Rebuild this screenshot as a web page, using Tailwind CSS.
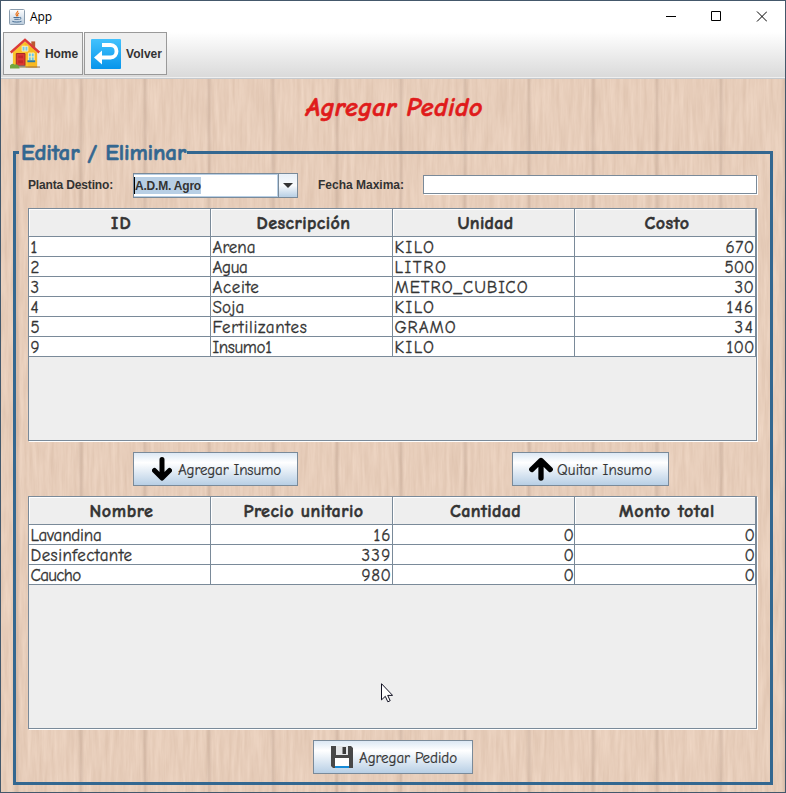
<!DOCTYPE html>
<html lang="es">
<head>
<meta charset="utf-8">
<title>App</title>
<script src="https://cdn.jsdelivr.net/npm/@tailwindcss/browser@4"></script>
</head>
<body class="w-[786px] h-[793px] overflow-hidden">
<div class="relative isolate w-[786px] h-[793px] border border-[#44586b] flex flex-col text-[#333333] overflow-hidden font-['Comic_Sans_MS','Comic_Neue','Open_Sans',sans-serif]">

  <header class="h-[31px] shrink-0 bg-white flex items-center pl-2 text-black">
    <svg class="w-4 h-4" viewBox="0 0 16 16"><defs><linearGradient id="jb" x2="0" y2="1"><stop stop-color="#fff"/><stop offset="1" stop-color="#b9cbdc"/></linearGradient></defs><rect x=".5" y=".5" width="15" height="15" rx="1" fill="url(#jb)" stroke="#8b9dae"/><path d="M8.6 1.8c1 1.6-2.9 2.3-1.4 4.2l.9 1.3M10 4.1C8.500 5 8 5.500 9.100 7.300" fill="none" stroke="#e8731c" stroke-width="1.200"/><path d="M4.500 8.500h6M5.300 10.300h4.500M10.500 8.500c2-.6 2 1.400 0 2M3.300 12.300c1.500 1 7.500 1 9.200 0" fill="none" stroke="#466d94"/></svg>
    <span class="ml-[5px] text-xs leading-4 font-['Segoe_UI','Open_Sans',sans-serif]" data-w="22">App</span>
    <svg class="ml-auto mr-[18px] w-[101px] h-[11px]" viewBox="0 0 101 11" fill="none" stroke="#000"><path d="M0 5.500h10"/><path d="M45.500.5h9v9h-9z"/><path d="M91 .5l10 10M101 .5l-10 10"/></svg>
  </header>

  <nav class="h-[45px] shrink-0 bg-gradient-to-b from-white to-[#dadada] flex gap-px pl-[2px] font-['Arial','Liberation_Sans',sans-serif] font-bold text-xs">
    <button class="w-20 h-[43px] bg-[#eeeeee] border border-[#999999] flex items-center pl-[6px]">
      <svg class="w-[30px] h-[31px] shrink-0" viewBox="0 0 31 31"><path d="M22 3h4v9h-4z" fill="#ba5a31"/><path d="M3 14L15.500 3 28 14v16H3z" fill="#fbc52c"/><path d="M15 4l13 11v15H19z" fill="#f5ae1b" opacity=".55"/><path d="M.8 14.500L15.500 1.500 30.200 14.500" fill="none" stroke="#db3b38" stroke-width="2.500"/><path d="M12.500 8h6v5h-6z" fill="#72c9ed" stroke="#fff2bd"/><path d="M15.500 8v5" stroke="#fff2bd"/><path d="M6.500 15.500h9V28h-9z" fill="#dc3835" stroke="#a42b23"/><path d="M8.500 17.500h5v3h-5zm0 5h5v3h-5z" fill="#c62828"/><path d="M19 15h6v8h-6z" fill="#67c6ed" stroke="#fff0ae"/><path d="M22 15v8M19 19h6" stroke="#fff0ae"/><path d="M18 23.500h8" stroke="#2678a6" stroke-width="2"/><path d="M6 28h10v2H6z" fill="#8f8f89"/><path d="M16 29.500h15" stroke="#8f6540"/><path d="M0 31v-3q2-3 5-1 3-2 5 4z" fill="#74a740"/></svg>
      <span class="ml-[5px] whitespace-nowrap" data-w="33">Home</span>
    </button>
    <button class="w-[83px] h-[43px] bg-[#eeeeee] border border-[#999999] flex items-center pl-[6px]">
      <svg class="w-[30px] h-[30px] shrink-0" viewBox="0 0 30 30"><defs><linearGradient id="vb" x2="0" y2="1"><stop stop-color="#43c2fd"/><stop offset="1" stop-color="#0795eb"/></linearGradient></defs><rect width="30" height="30" rx="1" fill="url(#vb)"/><path d="M11 6h8.500c8 0 8 12.500 0 12.500H10" fill="none" stroke="#fff" stroke-width="3.800"/><path d="M3 18.500L11 11.500v14z" fill="#fff"/></svg>
      <span class="ml-[5px] whitespace-nowrap" data-w="36">Volver</span>
    </button>
  </nav>
  <div class="h-[2px] shrink-0 bg-[#eeeeee] border-b border-[#c5c9cd]"></div>

  <main class="relative flex-1 pt-[14px] px-3 flex flex-col">
    <svg class="absolute inset-0 -z-10 w-[784px] h-[714px]" aria-hidden="true">
      <defs>
        <filter id="grain" x="0" y="0" width="100%" height="100%" color-interpolation-filters="sRGB"><feTurbulence type="fractalNoise" baseFrequency=".26 .022" numOctaves="4" seed="8"/><feColorMatrix values=".075 0 0 0 .868  .09 0 0 0 .76  .1 0 0 0 .68  0 0 0 0 1"/></filter>
        <linearGradient id="joint"><stop stop-color="#a98d7c" stop-opacity="0"/><stop offset=".5" stop-color="#a98d7c" stop-opacity=".3"/><stop offset="1" stop-color="#a98d7c" stop-opacity="0"/></linearGradient>
        <pattern id="planks" x="13" width="64" height="714" patternUnits="userSpaceOnUse"><rect width="6" height="714" fill="url(#joint)"/></pattern>
      </defs>
      <rect width="784" height="714" filter="url(#grain)"/><rect width="784" height="714" fill="url(#planks)"/>
    </svg>

    <h1 class="h-[30px] text-[26px] leading-[31px] font-bold italic text-[#e01b1b] pl-[293px] whitespace-nowrap [-webkit-text-stroke:0.6px_#e01b1b]"><span data-w="177">Agregar Pedido</span></h1>

    <fieldset class="mt-[14px] w-[760px] h-[648px] border-[3px] border-[#336790] px-3">
      <legend class="-ml-[9px] w-[168px] h-[31px] pl-[2px] text-[23px] leading-[32px] font-bold text-[#336790] whitespace-nowrap [-webkit-text-stroke:0.6px_#336790]"><span data-w="165">Editar / Eliminar</span></legend>

      <div class="h-[40px] pt-[5px] flex items-start font-['Arial','Liberation_Sans',sans-serif] font-bold text-xs">
        <label class="w-[105px] leading-[25px]"><span data-w="85">Planta Destino:</span></label>
        <div class="w-[165px] h-[25px] border border-[#7a8a99] bg-white flex">
          <div class="flex-1 border-[#b8cfe5] border-y border-r pt-[2px]"><span class="inline-block h-[17px] leading-[18px] bg-[#b8cfe5] border-l border-black whitespace-nowrap" data-w="67">A.D.M. Agro</span></div>
          <div class="w-[19px] border-l border-[#7a8a99] bg-gradient-to-b from-[#e8f0f8] via-[#f8fafc] to-[#b8cfe5] flex items-center justify-center"><svg class="w-[10px] h-[5px]" viewBox="0 0 10 5"><path d="M0 0h10L5 5z" fill="#333"/></svg></div>
        </div>
        <label class="ml-5 w-[105px] leading-[25px]"><span data-w="86">Fecha Maxima:</span></label>
        <div class="mt-[2px] w-[334px] h-[19px] bg-white border border-[#7a8a99] shadow-[1px_1px_0_#fff]"></div>
      </div>

      <div class="w-[729px] h-[233px] border border-[#7a8a99] bg-[#eeeeee] shadow-[1px_1px_0_#fff]" data-table="insumos"></div>

      <div class="h-[55px] pt-[11px] flex pl-[105px]">
        <button class="w-[165px] h-[34px] border border-[#7a8a99] bg-gradient-to-b from-[#dce8f4] via-white via-30% to-[#b8cfe5] flex items-center pl-[18px] text-[15px]">
          <svg class="w-5 h-6 shrink-0" viewBox="0 0 20 24"><path d="M10 2.500v18M2.500 13.500L10 21l7.500-7.500" fill="none" stroke="#000" stroke-width="5" stroke-linecap="round" stroke-linejoin="round"/></svg>
          <span class="ml-[6px] mt-[3px] whitespace-nowrap [-webkit-text-stroke:0.2px_#333333]" data-w="103">Agregar Insumo</span>
        </button>
        <button class="ml-[214px] w-[157px] h-[34px] border border-[#7a8a99] bg-gradient-to-b from-[#dce8f4] via-white via-30% to-[#b8cfe5] flex items-center pl-4 text-[15px]">
          <svg class="w-6 h-6 shrink-0" viewBox="0 0 24 24"><path d="M12 21V4M2.800 12.500L12 3.500l9.200 9" fill="none" stroke="#000" stroke-width="5.300" stroke-linecap="round" stroke-linejoin="round"/></svg>
          <span class="ml-1 mt-[3px] whitespace-nowrap [-webkit-text-stroke:0.2px_#333333]" data-w="95">Quitar Insumo</span>
        </button>
      </div>

      <div class="w-[729px] h-[233px] border border-[#7a8a99] bg-[#eeeeee] shadow-[1px_1px_0_#fff]" data-table="pedido"></div>

      <button class="mt-[11px] ml-[285px] w-[160px] h-[34px] border border-[#7a8a99] bg-gradient-to-b from-[#dce8f4] via-white via-30% to-[#b8cfe5] flex items-center pl-4 text-[15px]">
        <svg class="w-6 h-6 shrink-0" viewBox="0 0 24 24"><path d="M1 1h20l2 2v20H3l-2-2z" fill="#484848"/><path d="M6 1h12v9H6z" fill="#e4e6e8"/><path d="M12.500 2h3.500v7h-3.500z" fill="#3c3c3c"/><path d="M5 13h14v10H5z" fill="#fff"/><path d="M5 21h14v2H5z" fill="#168bd8"/></svg>
        <span class="ml-[5px] mt-[3px] whitespace-nowrap [-webkit-text-stroke:0.2px_#333333]" data-w="98">Agregar Pedido</span>
      </button>
    </fieldset>
  </main>

  <svg class="absolute left-[380px] top-[682px] w-3 h-5" viewBox="0 0 12 20"><path d="M.5.700v16.200l3.800-3.600 2.500 5.500 2.400-1.100-2.500-5.300h4.900z" fill="#fff" stroke="#111122"/></svg>
</div>

<script>
  // Each entry is [text, rendered width in px].
  const tables = {
    insumos: {
      head: [['ID', 21], ['Descripción', 94], ['Unidad', 56], ['Costo', 45]],
      right: [false, false, false, true],
      rows: [
        [['1', 8], ['Arena', 43], ['KILO', 41], ['670', 29]],
        [['2', 9], ['Agua', 35], ['LITRO', 53], ['500', 30]],
        [['3', 9], ['Aceite', 47], ['METRO_CUBICO', 134], ['30', 20]],
        [['4', 10], ['Soja', 32], ['KILO', 41], ['146', 28]],
        [['5', 9], ['Fertilizantes', 95], ['GRAMO', 62], ['34', 20]],
        [['9', 9], ['Insumo1', 59], ['KILO', 41], ['100', 28]]
      ]
    },
    pedido: {
      head: [['Nombre', 64], ['Precio unitario', 120], ['Cantidad', 71], ['Monto total', 96]],
      right: [false, true, true, true],
      rows: [
        [['Lavandina', 71], ['16', 18], ['0', 10], ['0', 10]],
        [['Desinfectante', 102], ['339', 30], ['0', 10], ['0', 10]],
        [['Caucho', 50], ['980', 30], ['0', 10], ['0', 10]]
      ]
    }
  };
  const grid = 'grid grid-cols-[182px_182px_182px_181px]';
  const text = ([t, w]) => `<span data-w="${w}">${t}</span>`;
  document.querySelectorAll('[data-table]').forEach(box => {
    const t = tables[box.dataset.table];
    box.innerHTML =
      `<div class="${grid} h-7">` + t.head.map(c => `<div class="h-7 border-r border-b border-[#7a8a99] shadow-[inset_1px_1px_0_#fff] text-center text-[18px] leading-[30px] font-bold whitespace-nowrap pl-[4px] [-webkit-text-stroke:0.5px_#333333]">${text(c)}</div>`).join('') + '</div>' +
      t.rows.map(r => `<div class="${grid} h-5">` + r.map((c, i) => `<div class="h-5 bg-white border-r border-b border-[#7a8a99] pl-[1.5px] pr-[0.5px] text-[17px] leading-[21px] whitespace-nowrap [-webkit-text-stroke:0.3px_#333333] ${t.right[i] ? 'text-right' : 'text-left'}">${text(c)}</div>`).join('') + '</div>').join('');
  });
  // Spread the letters of every label over its nominal width.
  function fit() {
    document.querySelectorAll('[data-w]').forEach(el => {
      el.style.letterSpacing = '0px';
      const gap = (Number(el.dataset.w) - el.getBoundingClientRect().width) / el.textContent.length;
      el.style.letterSpacing = gap.toFixed(3) + 'px';
    });
  }
  fit();
  window.addEventListener('load', () => { fit(); requestAnimationFrame(fit); });
  new ResizeObserver(fit).observe(document.querySelector('h1'));
</script>
</body>
</html>
